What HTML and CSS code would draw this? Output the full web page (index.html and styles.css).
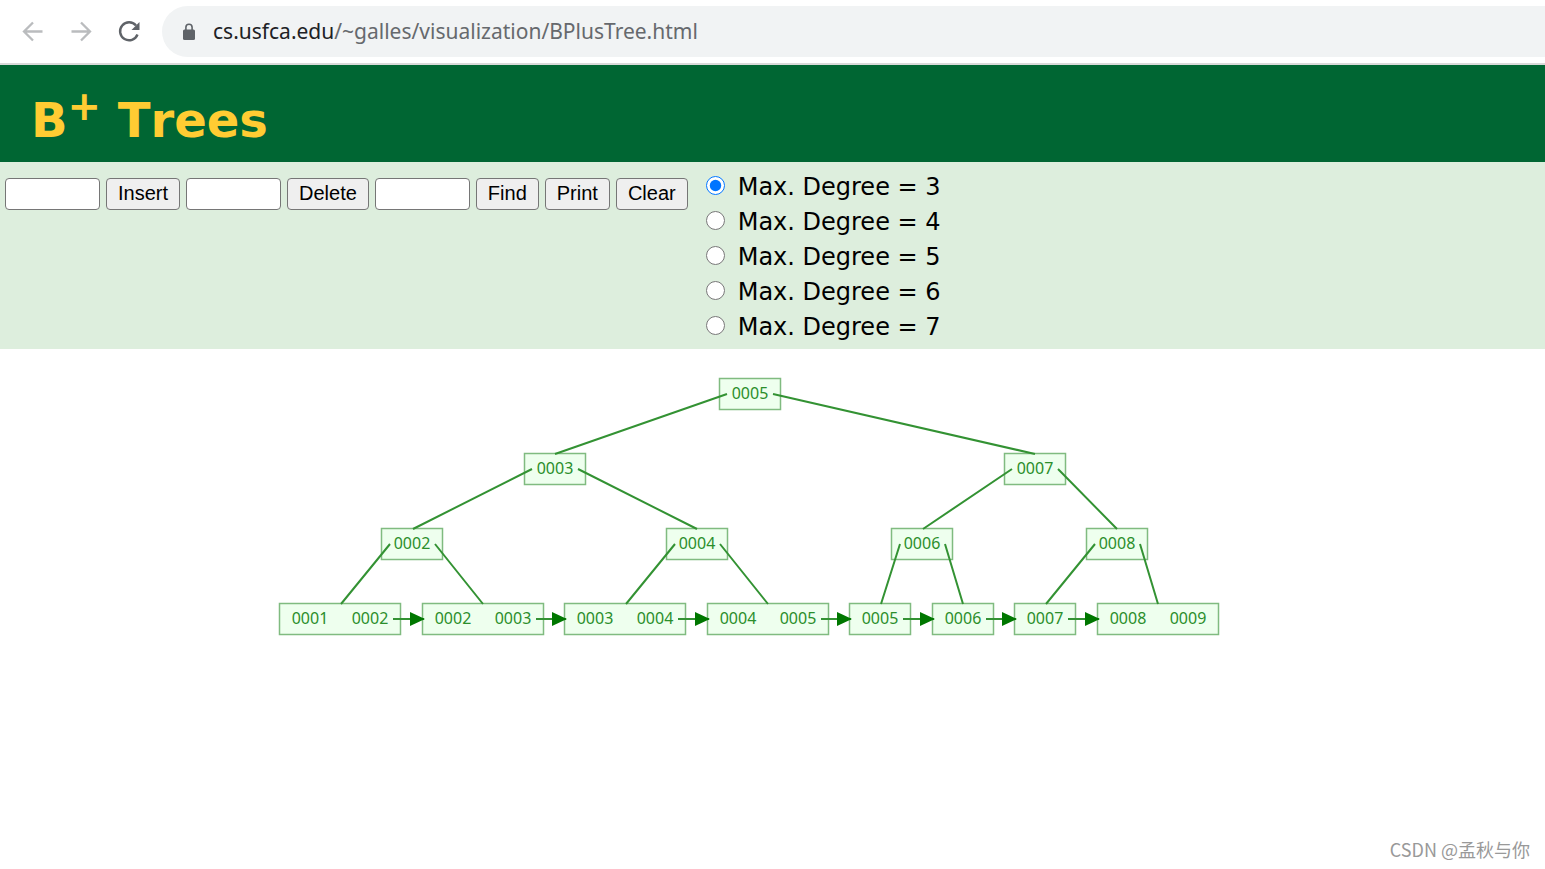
FILE: index.html
```html
<!DOCTYPE html>
<html lang="en">
<head>
<meta charset="utf-8">
<title>B+ Tree Visualization</title>
<link rel="stylesheet" href="styles.css">
</head>
<body>
<nav class="toolbar" aria-label="Browser">
  <button class="nav-button" type="button" aria-label="Back" disabled>
    <svg width="24" height="24" viewBox="0 0 24 24"><path d="M21.500 11.500H3.500M12 2.500L3 11.500L12 20.500" fill="none" stroke="currentColor" stroke-width="2.300"/></svg>
  </button>
  <button class="nav-button" type="button" aria-label="Forward" disabled>
    <svg width="24" height="24" viewBox="0 0 24 24"><path d="M2.500 11.500H20.500M12 2.500L21 11.500L12 20.500" fill="none" stroke="currentColor" stroke-width="2.300"/></svg>
  </button>
  <button class="nav-button reload" type="button" aria-label="Reload">
    <svg width="24" height="24" viewBox="0 0 24 24"><path d="M19 5.500A9 9 0 1 0 20.500 14.500" fill="none" stroke="currentColor" stroke-width="2.400"/><path d="M22.500 2V10H14.500Z" fill="currentColor"/></svg>
  </button>
  <div class="address">
    <svg class="lock" width="14" height="18" viewBox="0 0 14 18"><rect x="1" y="6.500" width="12" height="10.500" rx="1.500" fill="currentColor"/><path d="M3.900 7V4.300a3.100 3.100 0 0 1 6.200 0V7" fill="none" stroke="currentColor" stroke-width="1.600"/></svg>
    <span class="url"><span class="host">cs.usfca.edu</span>/~galles/visualization/BPlusTree.html</span>
  </div>
</nav>
<header class="heading">
  <h1>B<sup>+</sup> Trees</h1>
</header>
<form class="controls">
  <div class="actions">
    <input type="text" aria-label="Value to insert">
    <button type="button">Insert</button>
    <input type="text" aria-label="Value to delete">
    <button type="button">Delete</button>
    <input type="text" aria-label="Value to find">
    <button type="button">Find</button>
    <button type="button">Print</button>
    <button type="button">Clear</button>
  </div>
  <div class="degrees">
    <label><input type="radio" name="degree" checked>Max. Degree = 3</label>
    <label><input type="radio" name="degree">Max. Degree = 4</label>
    <label><input type="radio" name="degree">Max. Degree = 5</label>
    <label><input type="radio" name="degree">Max. Degree = 6</label>
    <label><input type="radio" name="degree">Max. Degree = 7</label>
  </div>
</form>
<main class="canvas">
  <svg class="tree" width="1500" height="300" viewBox="0 350 1500 300" role="img" aria-label="B+ tree">
    <defs>
      <marker id="arrow" markerUnits="userSpaceOnUse" markerWidth="15" markerHeight="14" refX="14" refY="7" orient="auto"><path d="M0 0L15 7L0 14Z" fill="#007700"/></marker>
    </defs>
    <g class="nodes">
      <rect x="719.500" y="378.500" width="61" height="31"/>
      <rect x="524.500" y="453.500" width="61" height="31"/>
      <rect x="1004.500" y="453.500" width="61" height="31"/>
      <rect x="381.500" y="528.500" width="61" height="31"/>
      <rect x="666.500" y="528.500" width="61" height="31"/>
      <rect x="891.500" y="528.500" width="61" height="31"/>
      <rect x="1086.500" y="528.500" width="61" height="31"/>
      <rect x="279.500" y="603.500" width="121" height="31"/>
      <rect x="422.500" y="603.500" width="121" height="31"/>
      <rect x="564.500" y="603.500" width="121" height="31"/>
      <rect x="707.500" y="603.500" width="121" height="31"/>
      <rect x="849.500" y="603.500" width="61" height="31"/>
      <rect x="932.500" y="603.500" width="61" height="31"/>
      <rect x="1014.500" y="603.500" width="61" height="31"/>
      <rect x="1097.500" y="603.500" width="121" height="31"/>
    </g>
    <g class="edges">
      <path d="M727 394L555 454M773 394L1035 454"/>
      <path d="M532 469L413 529M578 469L697 529M1012 469L923 529M1058 469L1117 529"/>
      <path d="M390 544L341 604M435 544L483 604M675 544L626 604M720 544L768 604"/>
      <path d="M900 544L881 604M945 544L963 604M1095 544L1046 604M1140 544L1158 604"/>
    </g>
    <g class="links">
      <path d="M393 619H424"/><path d="M536 619H566"/><path d="M678 619H709"/><path d="M821 619H851"/>
      <path d="M903 619H934"/><path d="M986 619H1016"/><path d="M1068 619H1099"/>
    </g>
    <g class="keys">
      <text x="750" y="399">0005</text>
      <text x="555" y="474">0003</text><text x="1035" y="474">0007</text>
      <text x="412" y="549">0002</text><text x="697" y="549">0004</text><text x="922" y="549">0006</text><text x="1117" y="549">0008</text>
      <text x="310" y="624">0001</text><text x="370" y="624">0002</text>
      <text x="453" y="624">0002</text><text x="513" y="624">0003</text>
      <text x="595" y="624">0003</text><text x="655" y="624">0004</text>
      <text x="738" y="624">0004</text><text x="798" y="624">0005</text>
      <text x="880" y="624">0005</text><text x="963" y="624">0006</text><text x="1045" y="624">0007</text>
      <text x="1128" y="624">0008</text><text x="1188" y="624">0009</text>
    </g>
  </svg>
</main>
<footer class="credit">CSDN @孟秋与你</footer>
</body>
</html>
```

FILE: styles.css
```css
* { box-sizing: border-box; }
body {
  margin: 0;
  min-height: 100vh;
  display: flex;
  flex-direction: column;
  background: #fff;
  color: #000;
  font-family: "DejaVu Sans", sans-serif;
}
.toolbar {
  display: flex;
  align-items: center;
  gap: 24px;
  padding: 6px 0 6px 21px;
  border-bottom: 2px solid #d9d9d9;
}
.nav-button {
  display: flex;
  padding: 0;
  border: 0;
  background: none;
  color: #babcbe;
}
.nav-button.reload { color: #5f6368; }
.address {
  flex: 1;
  display: flex;
  align-items: center;
  gap: 17px;
  height: 51px;
  margin-left: -3px;
  padding-left: 20px;
  border-radius: 26px 0 0 26px;
  background: #f1f3f4;
}
.lock { color: #5f6368; }
.url {
  padding-bottom: 1px;
  color: #66696d;
  font: 21px/32px "Noto Sans", "Open Sans", sans-serif;
}
.host { color: #202124; }
.heading {
  padding: 23px 31px 9px;
  background: #006633;
}
h1 {
  margin: 0;
  color: #ffcc33;
  font-size: 48px;
  line-height: 65px;
  font-kerning: none;
}
sup { font-size: 40px; line-height: 0; }
.controls {
  display: flex;
  align-items: flex-start;
  gap: 18px;
  padding: 8px 5px 4px;
  background: #ddeedd;
}
.actions {
  display: flex;
  gap: 6px;
  padding-top: 8px;
}
.actions input,
.actions button {
  height: 32px;
  border: 1px solid #767676;
  border-radius: 4px;
  font: 20px/28px "Liberation Sans", Arial, sans-serif;
}
.actions input { width: 95px; background: #fff; }
.actions button { padding: 0 11px 2px; background: #efefef; color: #000; }
.degrees { display: flex; flex-direction: column; }
.degrees label {
  display: flex;
  align-items: center;
  gap: 13px;
  font-size: 24px;
  line-height: 35px;
}
.degrees input {
  width: 19px;
  height: 19px;
  margin: 0 0 5px;
  accent-color: #0075ff;
}
.canvas { flex: 1; padding-top: 1px; }
.tree { display: block; }
.nodes rect { fill: #eeffee; stroke: #80bb80; stroke-width: 1.500; }
.edges path, .links path { fill: none; stroke: #339233; stroke-width: 2; }
.links path { marker-end: url(#arrow); }
.keys text {
  fill: #2b8e2b;
  font: 16px "Noto Sans", "Open Sans", sans-serif;
  text-anchor: middle;
}
.credit {
  padding: 0 15px 7px;
  color: #999;
  text-align: right;
  font: 18px/26px "Noto Sans CJK SC", sans-serif;
}
```
